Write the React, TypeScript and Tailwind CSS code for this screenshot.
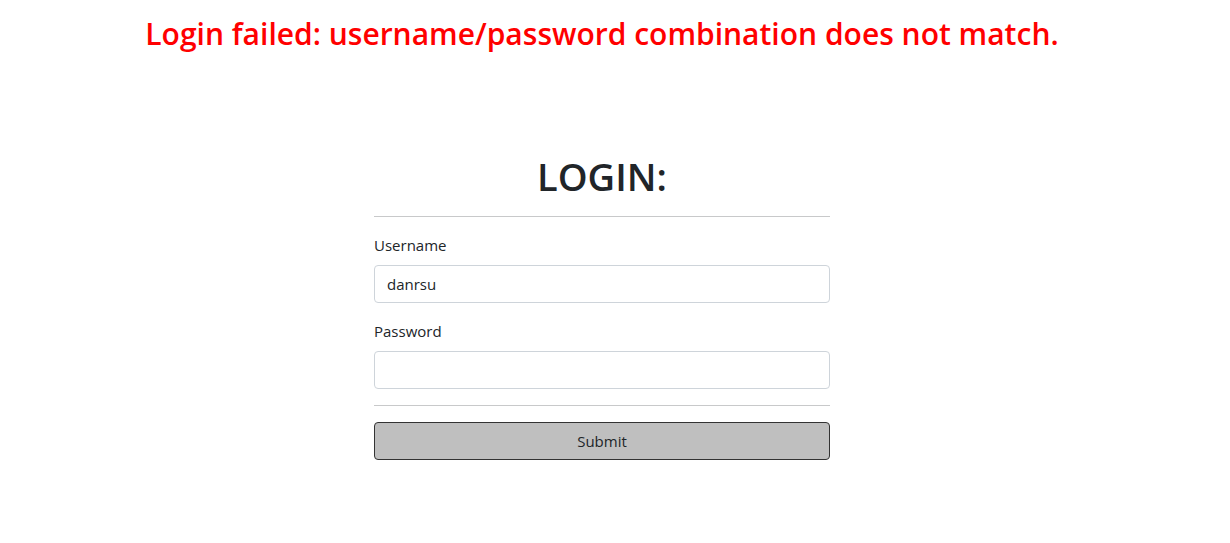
import React from "react";

export default function App() {
  return (
    <div className="min-h-[543px] w-full bg-white text-[#212529]" style={{ fontFamily: '"Open Sans", "Noto Sans", Arial, sans-serif' }}>
      <div className="w-[1204px]">
        <h2 className="pt-[15px] text-center text-[30px] leading-[38px] font-semibold text-[#ff0000]">
          Login failed: username/password combination does not match.
        </h2>
        <div className="mx-auto mt-[99px] w-[456px]">
          <h1 className="text-center text-[38px] leading-[48px] font-semibold text-[#212529]">LOGIN:</h1>
          <hr className="my-4 border-t border-[#c8c9ca]" />
          <div className="mb-4">
            <label className="mb-2 block text-[15px] leading-6">Username</label>
            <input
              type="text"
              defaultValue="danrsu"
              className="block h-[38px] w-full rounded border border-[#ced4da] px-3 text-[15px] text-[#212529] outline-none"
            />
          </div>
          <div className="mb-4">
            <label className="mb-2 block text-[15px] leading-6">Password</label>
            <input
              type="password"
              className="block h-[38px] w-full rounded border border-[#ced4da] px-3 text-[15px] outline-none"
            />
          </div>
          <hr className="my-4 border-t border-[#c8c9ca]" />
          <button className="block h-[38px] w-full rounded border border-[#333333] bg-[#bfbfbf] text-[15px] text-[#212529]">
            Submit
          </button>
        </div>
      </div>
    </div>
  );
}
